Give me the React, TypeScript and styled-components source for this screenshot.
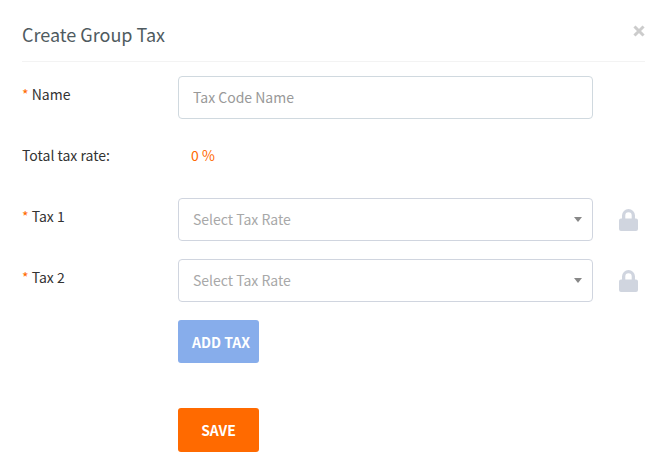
import React, { useState } from "react";
import styled, { createGlobalStyle } from "styled-components";

const GlobalStyle = createGlobalStyle`
  *, *::before, *::after { box-sizing: border-box; }
  body {
    margin: 0;
    background: #fff;
    color: #333;
    font-family: "Noto Sans CJK SC", "Open Sans", sans-serif;
    font-size: 14px;
    line-height: 20px;
  }
  button, input, select { font: inherit; }
`;

const Dialog = styled.main`
  padding: 14px 22px 20px;
`;

const Header = styled.header`
  display: flex;
  align-items: center;
  justify-content: space-between;
  height: 48px;
  padding-bottom: 8px;
  border-bottom: 1px solid #f3f3f3;
`;

const Title = styled.h1`
  margin: 0;
  color: #4f5b60;
  font-size: 18px;
  font-weight: 400;
  line-height: 24px;
`;

const CloseButton = styled.button`
  display: flex;
  align-items: center;
  justify-content: center;
  width: 12px;
  height: 12px;
  margin-bottom: 6px;
  padding: 0;
  border: 0;
  background: none;
  cursor: pointer;
`;

const Form = styled.form`
  display: grid;
  gap: 18px;
  padding-top: 14px;
`;

const Row = styled.div`
  display: grid;
  grid-template-columns: 156px minmax(0, 1fr) 52px;
  min-height: 43px;
`;

const Label = styled.label`
  padding-top: 8px;
`;

const Required = styled.span`
  color: #ff6a00;
`;

const TotalLabel = styled.span`
  padding-top: 8px;
`;

const Total = styled.output`
  padding: 8px 13px;
  color: #ff6a00;
`;

const TextInput = styled.input`
  width: 100%;
  height: 43px;
  padding: 0 14px 2px;
  border: 1px solid #d0d9df;
  border-radius: 4px;
  outline: 0;
  background: #fff;
  color: #333;
  &::placeholder { color: #999; opacity: 1; }
  &:focus { border-color: #87adeb; }
`;

const SelectFrame = styled.div`
  display: grid;
  align-items: center;
`;

const Select = styled.select`
  grid-area: 1 / 1;
  width: 100%;
  height: 43px;
  padding: 0 32px 2px 14px;
  border: 1px solid #d0d5df;
  border-radius: 4px;
  outline: 0;
  appearance: none;
  background: #fff;
  color: #a8a8a8;
  &:focus { border-color: #87adeb; }
`;

const Caret = styled.svg`
  grid-area: 1 / 1;
  justify-self: end;
  margin-right: 11px;
  pointer-events: none;
`;

const LockButton = styled.button`
  display: flex;
  align-items: center;
  justify-self: end;
  margin-right: 7px;
  padding: 0;
  border: 0;
  background: none;
`;

const Action = styled.button<{ $tone: "add" | "save" }>`
  grid-column: 2;
  justify-self: start;
  width: 81px;
  height: ${({ $tone }) => ($tone === "save" ? 44 : 43)}px;
  padding: 0;
  padding-left: ${({ $tone }) => ($tone === "add" ? 5 : 0)}px;
  border: 0;
  border-radius: 3px;
  background: ${({ $tone }) => ($tone === "save" ? "#ff6a00" : "#87adeb")};
  color: #fff;
  font-weight: 700;
  white-space: nowrap;
  cursor: pointer;
`;

const SaveRow = styled(Row)`
  margin-top: 27px;
`;

function TaxRow({ index }: { index: number }) {
  const id = `tax-${index}`;
  return (
    <Row>
      <Label htmlFor={id}>
        <Required>*</Required> Tax {index}
      </Label>
      <SelectFrame>
        <Select id={id} required defaultValue="">
          <option value="">Select Tax Rate</option>
        </Select>
        <Caret width="8" height="5" viewBox="0 0 8 5" aria-hidden="true">
          <path d="M0 0h8L4 5z" fill="#888" />
        </Caret>
      </SelectFrame>
      <LockButton type="button" aria-label={`Lock tax ${index}`}>
        <svg width="19" height="22" viewBox="0 0 19 22" aria-hidden="true">
          <path
            fill="#d0d5df"
            fillRule="evenodd"
            d="M3 9.5V6.500a6.500 6.500 0 0 1 13 0v3h1a2 2 0 0 1 2 2V20a2 2 0 0 1-2 2H2a2 2 0 0 1-2-2v-8.500a2 2 0 0 1 2-2zM6.300 9.500h6.400v-3a3.200 3.200 0 0 0-6.400 0z"
          />
        </svg>
      </LockButton>
    </Row>
  );
}

export default function App() {
  const [count, setCount] = useState(2);
  return (
    <>
      <GlobalStyle />
      <Dialog>
        <Header>
          <Title>Create Group Tax</Title>
          <CloseButton type="button" aria-label="Close">
            <svg width="12" height="12" viewBox="0 0 12 12" aria-hidden="true">
              <path d="M2.500 2.500l7 7M9.500 2.500l-7 7" stroke="#ccc" strokeWidth="3" strokeLinecap="square" />
            </svg>
          </CloseButton>
        </Header>
        <Form onSubmit={(event) => event.preventDefault()}>
          <Row>
            <Label htmlFor="tax-name">
              <Required>*</Required> Name
            </Label>
            <TextInput id="tax-name" required placeholder="Tax Code Name" />
          </Row>
          <Row>
            <TotalLabel id="total-label">Total tax rate:</TotalLabel>
            <Total aria-labelledby="total-label">0 %</Total>
          </Row>
          {Array.from({ length: count }, (_, i) => (
            <TaxRow key={i} index={i + 1} />
          ))}
          <Row>
            <Action type="button" $tone="add" onClick={() => setCount(count + 1)}>
              ADD TAX
            </Action>
          </Row>
          <SaveRow>
            <Action type="submit" $tone="save">
              SAVE
            </Action>
          </SaveRow>
        </Form>
      </Dialog>
    </>
  );
}
